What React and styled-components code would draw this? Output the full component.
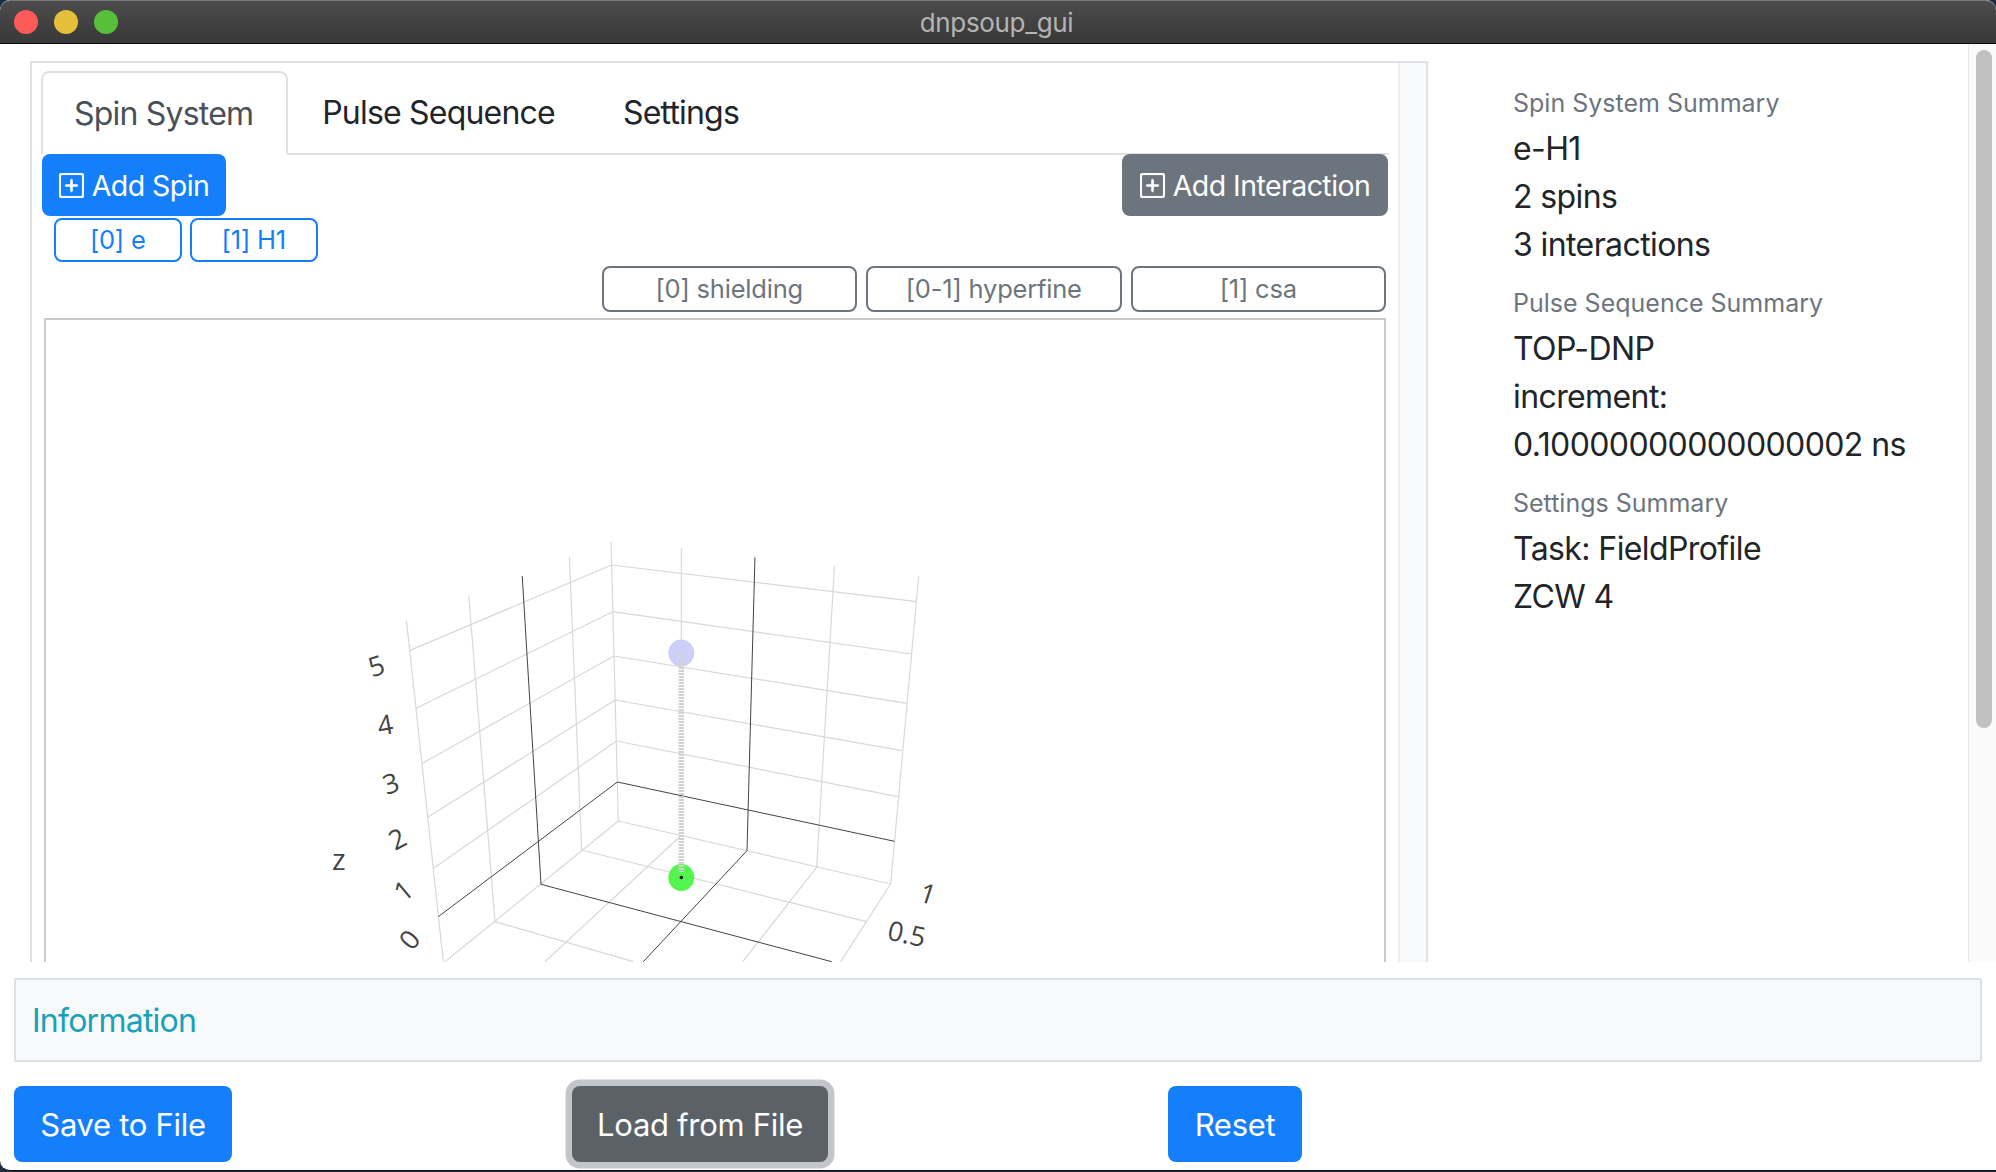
import React from "react";
import styled, { createGlobalStyle } from "styled-components";
import { BsPlusSquare } from "react-icons/bs";

const Global = createGlobalStyle`
  html, body { margin: 0; padding: 0; background: #1c2f42; overflow: hidden; }
  * { box-sizing: border-box; }
  #root { width: 1996px; height: 1172px; }
`;

const sans = `Inter, "Liberation Sans", sans-serif`;

const Window = styled.div`
  width: 1996px;
  height: 1171px;
  background: #fff;
  border-bottom: 1px solid #111;
  border-radius: 10px 10px 0 10px;
  overflow: hidden;
  font-family: ${sans};
  color: #212529;
`;
const TitleBar = styled.header`
  position: relative;
  height: 44px;
  display: flex;
  align-items: center;
  justify-content: center;
  background: linear-gradient(#4c4c4c, #383838);
  border-top: 1px solid #777;
  border-bottom: 1px solid #0a0a0a;
  border-radius: 10px 10px 0 0;
`;
const Lights = styled.div`
  position: absolute;
  left: 14px;
  top: 9px;
  display: flex;
  gap: 16px;
`;
const Light = styled.span`
  width: 24px;
  height: 24px;
  border-radius: 50%;
  background: ${(p) => p.$color};
`;
const Title = styled.span`
  font-size: 26px;
  color: #b4b4b4;
  margin-right: 3px;
  letter-spacing: -0.35px;
`;
const Main = styled.main`
  height: 918px;
  display: flex;
  overflow: hidden;
`;
const LeftPane = styled.section`
  width: 1428px;
  padding: 17px 0 0 30px;
  flex: none;
`;
const Panel = styled.div`
  width: 1398px;
  height: 1000px;
  display: flex;
  border: 2px solid #dee2e6;
  border-bottom: 0;
`;
const PanelBody = styled.div`
  width: 1366px;
  flex: none;
  padding: 8px 9px 0 9px;
`;
const PanelTrack = styled.div`
  flex: 1;
  background: #f8f9fa;
  border-left: 2px solid #eceef0;
`;
const TabBar = styled.nav`
  display: flex;
  height: 84px;
  border-bottom: 2px solid #dee2e6;
`;
const Tab = styled.div`
  height: ${(p) => (p.$active ? "84px" : "82px")};
  display: flex;
  align-items: center;
  padding: 0 ${(p) => (p.$active ? "33px 0 31px" : "32px")};
  font-size: 32px;
  letter-spacing: -0.8px;
  border: 2px solid ${(p) => (p.$active ? "#dee2e6" : "transparent")};
  border-bottom-color: ${(p) => (p.$active ? "#fff" : "transparent")};
  border-radius: 8px 8px 0 0;
  background: #fff;
  color: ${(p) => (p.$active ? "#495057" : "#212529")};
`;
const ActionRow = styled.div`
  display: flex;
  justify-content: space-between;
  margin: -1px 1px 0 1px;
`;
const Button = styled.button`
  display: inline-flex;
  align-items: center;
  justify-content: center;
  gap: ${(p) => (p.$gap ? p.$gap : "0")};
  height: ${(p) => p.$h || "76px"};
  width: ${(p) => p.$w};
  padding: 0;
  border: 0;
  border-radius: 8px;
  font-family: ${sans};
  font-size: ${(p) => p.$size || "31px"};
  letter-spacing: ${(p) => p.$track || "-0.3px"};
  color: #fff;
  background: ${(p) => p.$bg};
  box-shadow: ${(p) => (p.$ring ? "0 0 0 6.5px #c2c5ca" : "none")};
`;
const PlusIcon = styled(BsPlusSquare)`
  stroke: currentColor;
  stroke-width: 0.6;
  flex: none;
`;
const TagRow = styled.div`
  display: flex;
  justify-content: ${(p) => (p.$end ? "flex-end" : "flex-start")};
  gap: ${(p) => p.$gap};
  margin: ${(p) => p.$margin};
`;
const Tag = styled.div`
  display: flex;
  align-items: center;
  justify-content: center;
  width: ${(p) => p.$w};
  height: ${(p) => p.$h};
  padding-bottom: 2px;
  border: 2px solid ${(p) => p.$color};
  border-radius: 8px;
  color: ${(p) => p.$color};
  font-size: 25.5px;
  letter-spacing: -0.2px;
`;
const PlotBox = styled.div`
  margin: 6px 3px 0 3px;
  height: 700px;
  border: 2px solid #ccc;
`;
const PlotSvg = styled.svg`
  display: block;
`;
const AxisText = styled.text`
  font-family: "Open Sans", sans-serif;
  font-size: ${(p) => p.$size || "27px"};
  font-weight: 500;
  fill: #444;
  text-anchor: middle;
  dominant-baseline: central;
`;
const Summary = styled.aside`
  width: 540px;
  flex: none;
  padding: 37px 0 0 85px;
`;
const SummaryHead = styled.div`
  height: 44px;
  line-height: 44px;
  font-size: 25px;
  color: #6c757d;
  margin-top: ${(p) => (p.$first ? "0" : "12px")};
`;
const SummaryLine = styled.div`
  height: 48px;
  line-height: 48px;
  font-size: 32px;
  letter-spacing: -0.6px;
  white-space: nowrap;
`;
const Scrollbar = styled.div`
  width: 28px;
  flex: 1;
  background: #fafafa;
  border-left: 1px solid #e8e8e8;
  padding: 6px 4px 0 7px;
`;
const Thumb = styled.div`
  height: 678px;
  border-radius: 8px;
  background: #c1c1c1;
`;
const InfoBar = styled.div`
  height: 84px;
  margin: 16px 14px 0 14px;
  padding-left: 16px;
  display: flex;
  align-items: center;
  background: #f8f9fa;
  border: 2px solid #dee2e6;
  font-size: 32px;
  letter-spacing: -0.75px;
  color: #17a2b8;
`;
const BottomRow = styled.div`
  display: flex;
  gap: 340px;
  margin: 24px 0 0 14px;
`;

const A = (X, Y) => [300 + X / 2.376, 520 + Y / 3];
const B = (X, Y) => [420 + X / 3, 760 + Y / 3];

const grid = [
  A(740, 135), A(260, 392), A(743, 275), A(276, 565), A(746, 408), A(291, 730),
  A(749, 540), A(305, 890), A(752, 663), A(318, 1044),
  A(740, 135), A(1465, 245), A(743, 275), A(1453, 402), A(746, 408), A(1441, 550),
  A(749, 540), A(1430, 692), A(752, 663), A(1420, 830),
  A(739, 65), B(595, 183), A(640, 110), B(485, 270), A(401, 228), B(225, 485),
  A(253, 302), B(70, 605), A(906, 85), A(906, 400), A(1270, 138), B(1190, 322),
  A(1470, 168), B(1412, 372),
  B(595, 183), B(1412, 372), B(485, 270), B(1340, 485), B(225, 485), B(640, 605),
  B(595, 183), B(75, 605), B(785, 225), B(375, 605), B(1190, 322), B(968, 605),
  B(1412, 372), B(1262, 605),
];
const dark = [
  A(528, 168), B(363, 373), A(1081, 112), B(981, 272),
  B(592, 66), B(1424, 244), B(592, 66), B(55, 470),
  B(363, 373), B(1235, 605), B(981, 272), B(670, 605),
];
const pairs = (list) => {
  const out = [];
  for (let i = 0; i < list.length; i += 2) out.push([list[i], list[i + 1]]);
  return out;
};
const zLabels = [
  ["5", 376, 665, -18], ["4", 385, 724, -10], ["3", 390.7, 782.7, -18],
  ["2", 397, 838, -28], ["1", 403, 890, -40], ["0", 409, 939, -50],
];

function Plot() {
  return (
    <PlotSvg width="1338" height="642" viewBox="46 320 1338 642">
      {pairs(grid).map(([a, b], i) => (
        <line key={i} x1={a[0]} y1={a[1]} x2={b[0]} y2={b[1]} stroke="#d8d8d8" strokeWidth="1.2" />
      ))}
      {pairs(dark).map(([a, b], i) => (
        <line key={i} x1={a[0]} y1={a[1]} x2={b[0]} y2={b[1]} stroke="#444" strokeWidth="1" />
      ))}
      <ellipse cx="681.3" cy="653" rx="13" ry="13.5" fill="#ccd0f6" />
      <ellipse cx="681.3" cy="877.5" rx="13" ry="13.5" fill="#55f54f" />
      <line x1="681.3" y1="655" x2="681.3" y2="872" stroke="#d2d2d2" strokeWidth="5.5" strokeDasharray="2 1" />
      <circle cx="681.3" cy="877.5" r="1.7" fill="#000" />
      {zLabels.map(([t, x, y, r]) => (
        <AxisText key={t} x={x} y={y} transform={`rotate(${r} ${x} ${y})`}>{t}</AxisText>
      ))}
      <AxisText x="338.7" y="858" $size="29px">z</AxisText>
      <AxisText transform="translate(928 893) rotate(10) skewX(-8)">1</AxisText>
      <AxisText x="907" y="933" transform="rotate(12 907 933)">0.5</AxisText>
    </PlotSvg>
  );
}

export default function App() {
  return (
    <>
      <Global />
      <Window>
        <TitleBar>
          <Lights>
            <Light $color="#fc5b57" />
            <Light $color="#e5bf3c" />
            <Light $color="#57c038" />
          </Lights>
          <Title>dnpsoup_gui</Title>
        </TitleBar>
        <Main>
          <LeftPane>
            <Panel>
              <PanelBody>
                <TabBar>
                  <Tab $active>Spin System</Tab>
                  <Tab>Pulse Sequence</Tab>
                  <Tab>Settings</Tab>
                </TabBar>
                <ActionRow>
                  <Button $w="184px" $h="62px" $size="28.5px" $track="-0.55px" $gap="8px" $bg="#157ffb">
                    <PlusIcon size={25} /> Add Spin
                  </Button>
                  <Button $w="266px" $h="62px" $size="28.5px" $track="-0.55px" $gap="8px" $bg="#6c757d">
                    <PlusIcon size={25} /> Add Interaction
                  </Button>
                </ActionRow>
                <TagRow $gap="8.5px" $margin="2px 0 0 13px">
                  <Tag $w="127.5px" $h="44px" $color="#157ffb">[0] e</Tag>
                  <Tag $w="127.5px" $h="44px" $color="#157ffb">[1] H1</Tag>
                </TagRow>
                <TagRow $end $gap="9px" $margin="4px 3px 0 0">
                  <Tag $w="255.5px" $h="46px" $color="#6c757d">[0] shielding</Tag>
                  <Tag $w="255.5px" $h="46px" $color="#6c757d">[0-1] hyperfine</Tag>
                  <Tag $w="255.5px" $h="46px" $color="#6c757d">[1] csa</Tag>
                </TagRow>
                <PlotBox>
                  <Plot />
                </PlotBox>
              </PanelBody>
              <PanelTrack />
            </Panel>
          </LeftPane>
          <Summary>
            <SummaryHead $first>Spin System Summary</SummaryHead>
            <SummaryLine>e-H1</SummaryLine>
            <SummaryLine>2 spins</SummaryLine>
            <SummaryLine>3 interactions</SummaryLine>
            <SummaryHead>Pulse Sequence Summary</SummaryHead>
            <SummaryLine>TOP-DNP</SummaryLine>
            <SummaryLine>increment:</SummaryLine>
            <SummaryLine>0.10000000000000002 ns</SummaryLine>
            <SummaryHead>Settings Summary</SummaryHead>
            <SummaryLine>Task: FieldProfile</SummaryLine>
            <SummaryLine>ZCW 4</SummaryLine>
          </Summary>
          <Scrollbar>
            <Thumb />
          </Scrollbar>
        </Main>
        <InfoBar>Information</InfoBar>
        <BottomRow>
          <Button $w="218px" $bg="#157ffb">Save to File</Button>
          <Button $w="256px" $bg="#5a6268" $ring>Load from File</Button>
          <Button $w="134px" $bg="#157ffb">Reset</Button>
        </BottomRow>
      </Window>
    </>
  );
}
